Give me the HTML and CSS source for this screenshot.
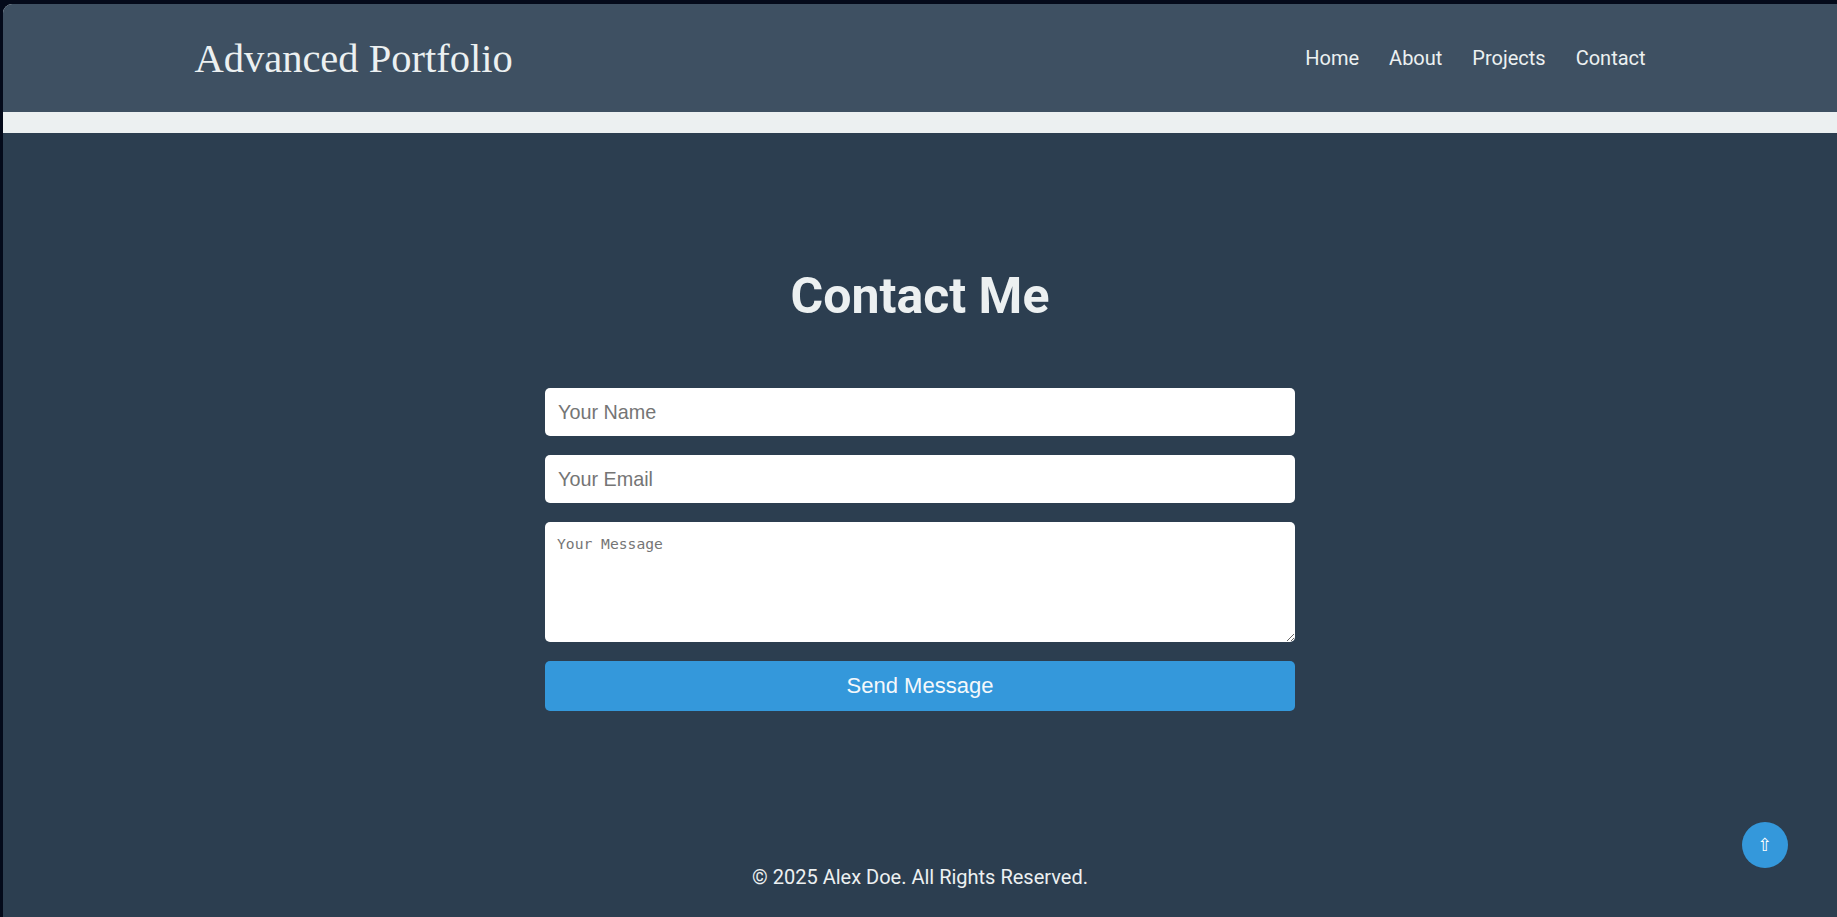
FILE: index.html
```html
<!DOCTYPE html>
<html lang="en">
<head>
<meta charset="utf-8">
<title>Advanced Portfolio</title>
<link rel="stylesheet" href="styles.css">
</head>
<body>
<div class="window">
  <header class="site-header">
    <div class="container header-inner">
      <div class="logo">Advanced Portfolio</div>
      <nav class="nav">
        <a href="#home">Home</a>
        <a href="#about">About</a>
        <a href="#projects">Projects</a>
        <a href="#contact">Contact</a>
      </nav>
    </div>
  </header>
  <main class="main">
    <section class="contact" id="contact">
      <h2 class="contact-title">Contact Me</h2>
      <form class="contact-form">
        <input class="field" type="text" placeholder="Your Name">
        <input class="field" type="email" placeholder="Your Email">
        <textarea class="field-area" placeholder="Your Message"></textarea>
        <button class="send-btn" type="button">Send Message</button>
      </form>
    </section>
    <footer class="footer">© 2025 Alex Doe. All Rights Reserved.</footer>
  </main>
  <button class="to-top" type="button">⇧</button>
</div>
</body>
</html>
```

FILE: styles.css
```css
* {
  box-sizing: border-box;
}

html, body {
  margin: 0;
  padding: 0;
  height: 100%;
}

body {
  background: #040a1a;
  font-family: Roboto, "Liberation Sans", sans-serif;
  color: #ecf0f1;
  overflow: hidden;
}

.window {
  margin: 4px 0 0 3px;
  height: calc(100vh - 4px);
  display: flex;
  flex-direction: column;
  background: #ecf0f1;
  border-top-left-radius: 9px;
  overflow: hidden;
}

.site-header {
  height: 108px;
  background: #3e5062;
  margin-bottom: 21px;
  display: flex;
  align-items: center;
  flex-shrink: 0;
}

.container {
  width: 80%;
  margin: 0 auto;
  padding: 0 8px;
}

.header-inner {
  display: flex;
  justify-content: space-between;
  align-items: center;
}

.logo {
  font-family: "Liberation Serif", serif;
  font-size: 40.5px;
  line-height: normal;
  color: #ecf0f1;
}

.nav {
  display: flex;
  gap: 30px;
}

.nav a {
  color: #ecf0f1;
  text-decoration: none;
  font-family: Roboto, sans-serif;
  font-size: 20px;
  line-height: normal;
}

.main {
  flex: 1;
  background: #2c3e50;
  display: flex;
  flex-direction: column;
}

.contact {
  padding-top: 134px;
  display: flex;
  flex-direction: column;
  align-items: center;
}

.contact-title {
  margin: 0 0 63px;
  font-family: Roboto, sans-serif;
  font-weight: 700;
  font-size: 50px;
  line-height: normal;
  color: #ecf0f1;
}

.contact-form {
  width: 750px;
  display: flex;
  flex-direction: column;
  gap: 19px;
}

.field {
  height: 48px;
  border: none;
  border-radius: 5px;
  background: #fff;
  padding: 0 13px;
  font-family: "Liberation Sans", Arial, sans-serif;
  font-size: 19.8px;
  color: #333;
  outline: none;
}

.field::placeholder,
.field-area::placeholder {
  color: #757575;
  opacity: 1;
}

.field-area {
  height: 120px;
  border: none;
  border-radius: 5px;
  background: #fff;
  padding: 13px 12px;
  font-family: "DejaVu Sans Mono", monospace;
  font-size: 14.67px;
  color: #333;
  resize: vertical;
  outline: none;
}

.send-btn {
  height: 50px;
  border: none;
  border-radius: 5px;
  background: #3498db;
  color: #f4f8fb;
  font-family: "Liberation Sans", Arial, sans-serif;
  font-size: 22px;
  cursor: pointer;
}

.footer {
  margin-top: auto;
  padding-bottom: 28px;
  text-align: center;
  font-family: Roboto, sans-serif;
  font-size: 20px;
  line-height: normal;
  color: #ecf0f1;
}

.to-top {
  position: fixed;
  right: 49px;
  bottom: 49px;
  width: 46px;
  height: 46px;
  border: none;
  border-radius: 50%;
  background: #3498db;
  color: #fff;
  font-family: "DejaVu Sans", sans-serif;
  font-size: 18px;
  line-height: 46px;
  padding: 0;
  text-align: center;
}
```
